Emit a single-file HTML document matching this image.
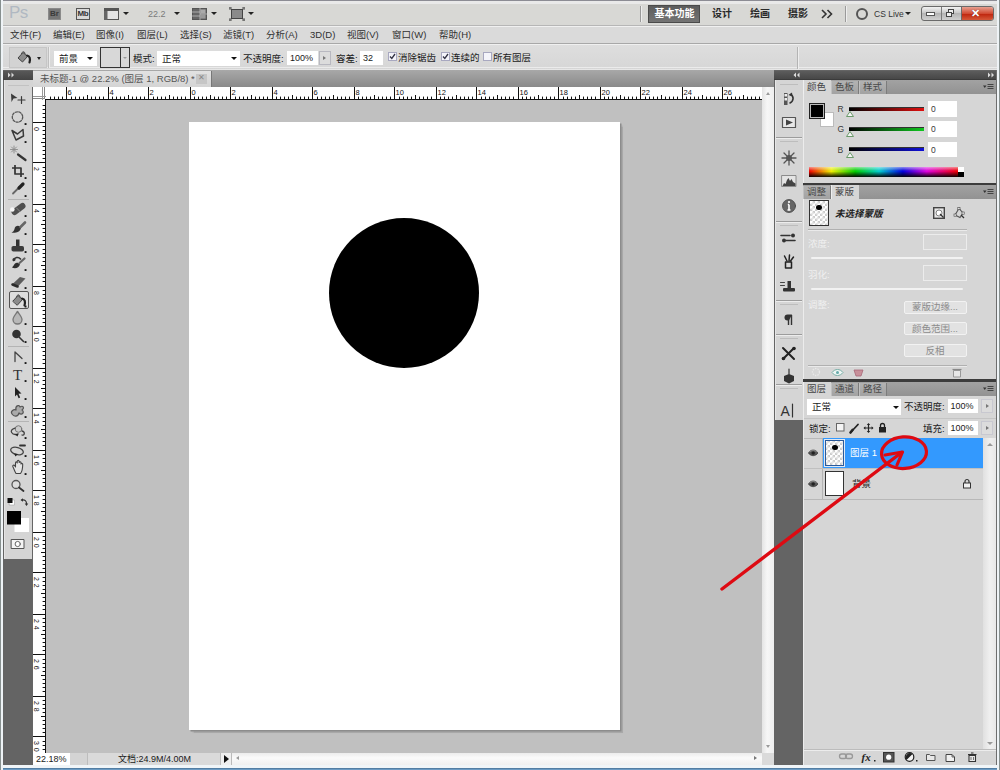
<!DOCTYPE html>
<html lang="zh-CN"><head><meta charset="utf-8"><title>Photoshop</title>
<style>
*{box-sizing:border-box;margin:0;padding:0}
html,body{width:1000px;height:770px;overflow:hidden;background:#d6d6d6}
body{font-family:"Liberation Sans","Noto Sans CJK SC",sans-serif;font-size:12px;color:#1a1a1a;position:relative;line-height:1}
.a{position:absolute}
.t{position:absolute;white-space:nowrap;line-height:14px;height:14px}
#win{left:0;top:0;width:1000px;height:770px;background:#d6d6d6;overflow:hidden}
/* bars */
#appbar{left:2px;top:1px;width:996px;height:25px;background:#d8d8d6}
#menubar{left:2px;top:27px;width:996px;height:16px;background:#d9d9d9}
#optbar{left:2px;top:44px;width:996px;height:26px;background:#dcdcdc}
.menu{top:29px;font-size:12px;color:#222}
.wht{background:#fff}
</style></head><body>
<div id="win" class="a">
<!--TOP-->
<div class="a" style="left:0;top:0;width:1000px;height:1px;background:#8c8c94"></div>
<div class="a" style="left:1px;top:1px;width:998px;height:2.500px;background:#e9e9e9"></div>
<div class="a" style="left:3px;top:3.500px;width:994px;height:22px;background:#d8d8d5"></div><div class="a" style="left:3px;top:25.200px;width:994px;height:1px;background:#b6b6b6"></div>
<div class="a" style="left:3px;top:26.200px;width:994px;height:1px;background:#f0f0f0"></div>
<div class="a" style="left:3px;top:27px;width:994px;height:16px;background:#dadada"></div>
<div class="a" style="left:3px;top:43px;width:994px;height:1px;background:#a8a8a8"></div><div class="a" style="left:3px;top:44px;width:994px;height:1px;background:#f0f0f0;z-index:1"></div>
<div class="a" style="left:3px;top:44px;width:994px;height:26px;background:linear-gradient(#dedede,#d6d6d6)"></div>
<div class="a" style="left:3px;top:66.500px;width:994px;height:1px;background:#ebebeb"></div><div class="a" style="left:3px;top:69px;width:994px;height:1px;background:#e6e6e6"></div>
<div class="t" style="left:9px;top:4px;font-size:17px;line-height:18px;height:18px;color:#b0b8c2;letter-spacing:-0.5px">Ps</div>
<div class="a" style="left:48px;top:8px;width:12.5px;height:11.5px;background:#767676;border:1px solid #8a8a8a"></div>
<div class="t" style="left:50px;top:7px;font-size:8px;font-weight:bold;color:#3a3a3a">Br</div>
<div class="a" style="left:76px;top:8px;width:14px;height:11.5px;background:#d8d8d8;border:1px solid #555"></div>
<div class="t" style="left:77.500px;top:7px;font-size:8px;font-weight:bold;color:#333;letter-spacing:-0.3px">Mb</div>
<svg class="a" style="left:104px;top:8px" width="15" height="12" viewBox="0 0 15 12"><rect x="0.500" y="0.500" width="14" height="11" fill="#e4e4e4" stroke="#555"/><rect x="0" y="0" width="15" height="3" fill="#555"/><rect x="0" y="3" width="3.500" height="9" fill="#666"/></svg>
<div class="a" style="left:123px;top:12px;width:0;height:0;border-top:3.5px solid #222;border-left:3.0px solid transparent;border-right:3.0px solid transparent"></div>
<div class="t" style="left:148px;top:6.500px;font-size:9px;color:#7a7a7a">22.2</div>
<div class="a" style="left:174px;top:12px;width:0;height:0;border-top:3.5px solid #222;border-left:3.0px solid transparent;border-right:3.0px solid transparent"></div>
<svg class="a" style="left:192px;top:8px" width="15" height="12" viewBox="0 0 15 12"><rect x="0.500" y="0.500" width="14" height="11" fill="#666" stroke="#555"/><rect x="8.500" y="1.500" width="5" height="4" fill="#aaa"/><rect x="8.500" y="6.500" width="5" height="4" fill="#999"/><path d="M8 0v12M0 4h8M0 8h8M8 6h7" stroke="#ccc" stroke-width="0.700"/></svg>
<div class="a" style="left:211px;top:12px;width:0;height:0;border-top:3.5px solid #222;border-left:3.0px solid transparent;border-right:3.0px solid transparent"></div>
<svg class="a" style="left:229px;top:7px" width="16" height="14" viewBox="0 0 16 14"><rect x="2.500" y="2.500" width="11" height="9" fill="#8a8a8a" stroke="#444"/><path d="M0 1h3M1 0v3M13 1h3M15 0v3M0 13h3M1 11v3M13 13h3M15 11v3" stroke="#555" stroke-width="1"/></svg>
<div class="a" style="left:248px;top:12px;width:0;height:0;border-top:3.5px solid #222;border-left:3.0px solid transparent;border-right:3.0px solid transparent"></div>
<div class="a" style="left:640px;top:6px;width:1px;height:16px;background:#9a9a9a"></div><div class="a" style="left:641px;top:6px;width:1px;height:16px;background:#eee"></div>
<div class="a" style="left:648px;top:5px;width:52px;height:18px;background:linear-gradient(#5c5c5c,#747474);border:1px solid #4a4a4a"></div>
<div class="t" style="left:654.500px;top:7px;font-size:10px;font-weight:bold;color:#fff">基本功能</div>
<div class="t" style="left:712px;top:7px;font-size:10px;font-weight:bold;color:#2a2a2a">设计</div>
<div class="t" style="left:750px;top:7px;font-size:10px;font-weight:bold;color:#2a2a2a">绘画</div>
<div class="t" style="left:788px;top:7px;font-size:10px;font-weight:bold;color:#2a2a2a">摄影</div>
<svg class="a" style="left:821px;top:9px" width="12" height="10" viewBox="0 0 12 10"><path d="M1 1l4 4l-4 4M6.500 1l4 4l-4 4" stroke="#333" stroke-width="1.600" fill="none"/></svg>
<div class="a" style="left:845px;top:6px;width:1px;height:16px;background:#9a9a9a"></div><div class="a" style="left:846px;top:6px;width:1px;height:16px;background:#eee"></div>
<div class="a" style="left:856px;top:7.500px;width:12px;height:12px;border:2.500px solid #555;border-radius:50%"></div>
<div class="t" style="left:874px;top:7px;font-size:8.500px;color:#333">CS Live</div>
<div class="a" style="left:905px;top:12px;width:0;height:0;border-top:3.5px solid #222;border-left:3.0px solid transparent;border-right:3.0px solid transparent"></div>
<div class="a" style="left:921px;top:6px;width:72.500px;height:14.500px;border:1px solid #6a6a6a;border-radius:3px;background:linear-gradient(#f2f2f2,#c4c4c4 50%,#b4b4b4 50%,#d0d0d0);overflow:hidden"><div class="a" style="left:38.500px;top:0;width:34px;height:14px;background:linear-gradient(#e8a090,#d04830 48%,#c02810 52%,#d86040);border-left:1px solid #6a6a6a"></div><div class="a" style="left:19px;top:0;width:1px;height:14px;background:#7a7a7a"></div></div>
<div class="a" style="left:926px;top:12px;width:9px;height:4px;background:#fff;border:1px solid #555"></div>
<div class="a" style="left:948px;top:9px;width:6px;height:5px;border:1px solid #444;background:#eee"></div><div class="a" style="left:945.500px;top:11.500px;width:6px;height:5px;border:1px solid #444;background:#eee"></div>
<div class="t" style="left:971px;top:5.500px;font-size:11px;font-weight:bold;color:#fff;text-shadow:0 0 1px #600">✕</div>
<div class="t" style="left:10px;top:28px;font-size:9.500px;color:#303030">文件(F)</div>
<div class="t" style="left:53px;top:28px;font-size:9.500px;color:#303030">编辑(E)</div>
<div class="t" style="left:96px;top:28px;font-size:9.500px;color:#303030">图像(I)</div>
<div class="t" style="left:137px;top:28px;font-size:9.500px;color:#303030">图层(L)</div>
<div class="t" style="left:180px;top:28px;font-size:9.500px;color:#303030">选择(S)</div>
<div class="t" style="left:223px;top:28px;font-size:9.500px;color:#303030">滤镜(T)</div>
<div class="t" style="left:266px;top:28px;font-size:9.500px;color:#303030">分析(A)</div>
<div class="t" style="left:310px;top:28px;font-size:9.500px;color:#303030">3D(D)</div>
<div class="t" style="left:347px;top:28px;font-size:9.500px;color:#303030">视图(V)</div>
<div class="t" style="left:392px;top:28px;font-size:9.500px;color:#303030">窗口(W)</div>
<div class="t" style="left:439px;top:28px;font-size:9.500px;color:#303030">帮助(H)</div>
<div class="a" style="left:8.500px;top:47px;width:38.500px;height:21px;background:#d3d3d3;border:1px solid #c6c6c6"></div>
<svg class="a" style="left:15px;top:49px" width="18" height="16" viewBox="0 0 18 16"><path d="M3 9 L8 3.500 L12.500 7.500 L7.500 13z" fill="#8c8c8c" stroke="#444" stroke-width="1"/><path d="M12 6.500 C15 7 15.500 10 14.500 13.500" stroke="#222" stroke-width="2.200" fill="none" stroke-linecap="round"/><path d="M6.500 5 c0.500 -3 3.500 -3 3.500 0" stroke="#444" stroke-width="1" fill="none"/></svg>
<div class="a" style="left:37px;top:57px;width:0;height:0;border-top:3.0px solid #222;border-left:2.5px solid transparent;border-right:2.5px solid transparent"></div>
<div class="a" style="left:48px;top:47px;width:1px;height:21px;background:#c0c0c0"></div><div class="a" style="left:49px;top:47px;width:1px;height:21px;background:#ececec"></div>
<div class="a wht" style="left:54px;top:51px;width:43px;height:15px"></div>
<div class="t" style="left:59px;top:51.500px;font-size:9.500px">前景</div>
<div class="a" style="left:87px;top:57px;width:0;height:0;border-top:3.5px solid #111;border-left:3.0px solid transparent;border-right:3.0px solid transparent"></div>
<div class="a" style="left:100px;top:46.500px;width:29.500px;height:21px;border:1px solid #333;background:#d8d8d8"></div><div class="a" style="left:120px;top:47px;width:1px;height:20px;background:#333"></div>
<div class="a" style="left:122.5px;top:57px;width:0;height:0;border-top:2.5px solid #999;border-left:2.0px solid transparent;border-right:2.0px solid transparent"></div>
<div class="t" style="left:133px;top:51.500px;font-size:9.500px">模式:</div>
<div class="a wht" style="left:157px;top:51px;width:83px;height:15px"></div>
<div class="t" style="left:162px;top:51.500px;font-size:9.500px">正常</div>
<div class="a" style="left:231px;top:57px;width:0;height:0;border-top:3.5px solid #111;border-left:3.0px solid transparent;border-right:3.0px solid transparent"></div>
<div class="t" style="left:243px;top:51.500px;font-size:9.500px">不透明度:</div>
<div class="a wht" style="left:287px;top:51px;width:31px;height:13.500px"></div>
<div class="t" style="left:290px;top:51px;font-size:9px">100%</div>
<div class="a" style="left:318.500px;top:51px;width:12.500px;height:13.500px;background:#dcdcdc;border:1px solid #b8b8c0"></div>
<div class="a" style="left:323px;top:55.500px;width:0;height:0;border-left:3px solid #777;border-top:2.500px solid transparent;border-bottom:2.500px solid transparent"></div>
<div class="t" style="left:336px;top:51.500px;font-size:9.500px">容差:</div>
<div class="a wht" style="left:360px;top:51px;width:23px;height:13.500px"></div>
<div class="t" style="left:363px;top:51px;font-size:9px">32</div>
<div class="a" style="left:388px;top:51.500px;width:8.500px;height:9px;background:#f4f4fa;border:1px solid #a8a8c0"></div>
<svg class="a" style="left:388px;top:52px" width="9" height="9" viewBox="0 0 9 9"><path d="M2 4.500l1.800 2L7 2" stroke="#334" stroke-width="1.300" fill="none"/></svg>
<div class="t" style="left:398px;top:50.500px;font-size:9.500px">消除锯齿</div>
<div class="a" style="left:441px;top:51.500px;width:8.500px;height:9px;background:#f4f4fa;border:1px solid #a8a8c0"></div>
<svg class="a" style="left:441px;top:52px" width="9" height="9" viewBox="0 0 9 9"><path d="M2 4.500l1.800 2L7 2" stroke="#334" stroke-width="1.300" fill="none"/></svg>
<div class="t" style="left:451px;top:50.500px;font-size:9.500px">连续的</div>
<div class="a" style="left:483px;top:51.500px;width:8.500px;height:9px;background:#f4f4fa;border:1px solid #a8a8c0"></div>
<div class="t" style="left:493px;top:50.500px;font-size:9.500px">所有图层</div>
<div class="a" style="left:797px;top:47px;width:1px;height:22px;background:#b4b4b4"></div><div class="a" style="left:798px;top:47px;width:1px;height:22px;background:#eee"></div>
<div class="a" style="left:996.200px;top:70px;width:1px;height:695px;background:#6e6e6e;z-index:3"></div><div class="a" style="left:997px;top:0;width:2.400px;height:770px;background:#eef3f6;z-index:3"></div><div class="a" style="left:999.300px;top:0;width:1px;height:770px;background:#87908f;z-index:3"></div>
<div class="a" style="left:0;top:764.500px;width:1000px;height:3.500px;background:#f0f5f8"></div><div class="a" style="left:0;top:767.800px;width:1000px;height:2.200px;background:linear-gradient(#3f607f,#5f8fb8 40%,#74a4cc)"></div>
<!--/TOP-->
<!--LEFT-->
<div class="a" style="left:0;top:0;width:1px;height:770px;background:#87908f"></div>
<div class="a" style="left:1px;top:0;width:2px;height:770px;background:#eef3f6"></div>
<div class="a" style="left:3px;top:70px;width:30px;height:695px;background:#646464"></div>
<div class="a" style="left:3px;top:70.5px;width:29.5px;height:9.5px;background:linear-gradient(#585858,#444)"></div>
<div class="a" style="left:3.5px;top:80px;width:29px;height:478.5px;background:#d5d5d5;border-left:1px solid #e4e4e4"></div>
<svg class="a" style="left:3px;top:70px" width="30" height="10" viewBox="0 0 30 10"><path d="M5 2.5l2.5 2.5L5 7.5zM8.5 2.5l2.5 2.5L8.500 7.5z" fill="#d8d8d8"/></svg>
<div class="a" style="left:8px;top:85px;width:21px;height:1px;background:#c2c2c2"></div>
<div class="a" style="left:8px;top:199px;width:21px;height:1px;background:#b4b4b4"></div>
<div class="a" style="left:8px;top:346px;width:21px;height:1px;background:#b4b4b4"></div>
<div class="a" style="left:8px;top:421px;width:21px;height:1px;background:#b4b4b4"></div>
<div class="a" style="left:8.5px;top:291px;width:20px;height:17.5px;border:1px solid #555;background:#dedede;border-radius:2px"></div>
<svg class="a" style="left:0;top:80px" width="33" height="480" viewBox="0 80 33 480" fill="none" stroke-linecap="round" stroke-linejoin="round"><rect x="24.6" y="123.1" width="1.9" height="1.9" fill="#1a1a1a"/><rect x="24.6" y="141.1" width="1.9" height="1.9" fill="#1a1a1a"/><rect x="24.6" y="177.1" width="1.9" height="1.9" fill="#1a1a1a"/><rect x="24.6" y="195.1" width="1.9" height="1.9" fill="#1a1a1a"/><rect x="24.6" y="215.1" width="1.9" height="1.9" fill="#1a1a1a"/><rect x="24.6" y="233.1" width="1.9" height="1.9" fill="#1a1a1a"/><rect x="24.6" y="251.1" width="1.9" height="1.9" fill="#1a1a1a"/><rect x="24.6" y="269.1" width="1.9" height="1.9" fill="#1a1a1a"/><rect x="24.6" y="287.1" width="1.9" height="1.9" fill="#1a1a1a"/><rect x="24.6" y="305.6" width="1.9" height="1.9" fill="#1a1a1a"/><rect x="24.6" y="323.1" width="1.9" height="1.9" fill="#1a1a1a"/><rect x="24.6" y="341.1" width="1.9" height="1.9" fill="#1a1a1a"/><rect x="24.6" y="362.1" width="1.9" height="1.9" fill="#1a1a1a"/><rect x="24.6" y="380.1" width="1.9" height="1.9" fill="#1a1a1a"/><rect x="24.6" y="398.1" width="1.9" height="1.9" fill="#1a1a1a"/><rect x="24.6" y="416.1" width="1.9" height="1.9" fill="#1a1a1a"/><rect x="24.6" y="437.1" width="1.9" height="1.9" fill="#1a1a1a"/><rect x="24.6" y="455.1" width="1.9" height="1.9" fill="#1a1a1a"/><rect x="24.6" y="473.1" width="1.9" height="1.9" fill="#1a1a1a"/><path d="M11 93.500 L17.500 98 L13.500 98.500 L11.500 102z" fill="#3a3a3a"/><path d="M18 100h7M21.500 96.500v7" stroke="#3a3a3a" stroke-width="1.200"/><circle cx="17.500" cy="117" r="5.200" stroke="#555" stroke-width="1.300" stroke-dasharray="2.200 1.400"/><path d="M12 130.500 L17.500 134 L23 129.500 L23.500 136 L16 140 z" stroke="#3a3a3a" stroke-width="1.500"/><path d="M18 154.500 L25.500 160" stroke="#333" stroke-width="2.200"/><path d="M14 146v7M10.500 149.500h7M11.500 147l5 5M16.500 147l-5 5" stroke="#8a8a8a" stroke-width="0.900"/><path d="M15 165v9h9M12 168h9v9" stroke="#333" stroke-width="1.700" stroke-linecap="butt"/><path d="M13 193.500 L19.500 187" stroke="#666" stroke-width="1.800"/><path d="M19 188 L23 184" stroke="#222" stroke-width="3.200"/><path d="M14.500 212 L22.500 206" stroke="#505050" stroke-width="6"/><path d="M16.500 208l3.500 3.500" stroke="#888" stroke-width="1"/><circle cx="12.300" cy="209.500" r="2.300" fill="#f6f6f6"/><path d="M11.500 232.500 C14 233 20 233 21 228 C19.500 224.500 15 225.500 14.500 229 C14 231 13 232 11.500 232.500z" fill="#333"/><path d="M20.500 227 L25 222.500" stroke="#666" stroke-width="2.600"/><path d="M16 239.500h3.500v7h-3.500z" fill="#333"/><rect x="11.500" y="246" width="12.500" height="5.500" rx="1.800" fill="#3c3c3c"/><path d="M12 267.500 C15 269 19 268 20 264.500 C18 261.500 14.500 262.500 14 265z" fill="#2e2e2e"/><path d="M19.500 263 L24.500 258.500" stroke="#666" stroke-width="2.200"/><path d="M13.500 260.500 a4 4 0 0 1 7 -1.500" stroke="#333" stroke-width="1.600"/><circle cx="14" cy="259.500" r="1.500" fill="#333"/><path d="M12 284.500 L20 277 L25.500 278.500 L17.500 287z" fill="#5c5c5c"/><path d="M12.500 284.500l5 2" stroke="#2a2a2a" stroke-width="2.600"/><path d="M13 301 L18 295.500 L22.500 299.500 L17.500 305z" fill="#8c8c8c" stroke="#444" stroke-width="1"/><path d="M22 298.500 C25 299 25.500 302 24.500 305.500" stroke="#222" stroke-width="2.200"/><path d="M16.500 297 c0.500 -3 3.500 -3 3.500 0" stroke="#444" stroke-width="1"/><path d="M17.500 311.500 C20 315 22 317 22 319.500 a4.500 4.500 0 0 1 -9 0 C13 317 15 315 17.500 311.500z" fill="#b8b8b8" stroke="#777" stroke-width="1.300"/><circle cx="16.500" cy="334" r="4.300" fill="#333"/><path d="M19.500 337.500 L23.500 341.500" stroke="#333" stroke-width="1.600"/><path d="M15 361.500 V352 L22 358.500" stroke="#444" stroke-width="1.300"/><text x="17.500" y="379.500" font-family="Liberation Serif, serif" font-size="15" text-anchor="middle" fill="#333" stroke="none">T</text><path d="M15 387 L21.500 393.500 L18.500 393.700 L20.200 397.500 L18.600 398.200 L17 394.500 L15 396.500z" fill="#222"/><path d="M12 414 C10 411 14 409 16 410 C15 406 19 404 20 407 C23 405 25 408 22 410 C25 412 22 416 19 413 C18 417 14 417 12 414z" fill="#aaa" stroke="#555" stroke-width="1.200"/><circle cx="18.500" cy="429" r="3.300" fill="#ccc" stroke="#777" stroke-width="1"/><path d="M15 428 C8 430 12 436 18 434 M22 431 C26 432 24 436 22 435" stroke="#444" stroke-width="1.300"/><path d="M15 434.500l3.500 -1l-1 3z" fill="#222"/><ellipse cx="17" cy="451" rx="6.500" ry="3.500" stroke="#444" stroke-width="1.300" transform="rotate(15 17 451)"/><path d="M14 453.500l4 0.500l-2.500 2.500z" fill="#222"/><path d="M20 445.500h5" stroke="#333" stroke-width="1.800"/><path d="M13 467 C12 465 14 464.500 15 466 L15.500 467 V463 C15.500 461.500 17 461.500 17.200 463 V461.500 C17.500 460 19 460 19.200 461.500 V462.500 C19.500 461.300 21 461.500 21 463 V464 C21.500 463 22.800 463.300 22.700 464.500 C22.700 468 22.500 471 20.500 473.500 H16 C15 472 14 469 13 467z" fill="#e4e4e4" stroke="#444" stroke-width="1.100"/><circle cx="16" cy="484.500" r="4" stroke="#555" stroke-width="1.300" fill="#ddd"/><path d="M19 487.500 L23.500 491" stroke="#333" stroke-width="1.800"/><rect x="9.500" y="500" width="5" height="5" fill="#fff" stroke="#999" stroke-width="0.500"/><rect x="7.500" y="498" width="5" height="5" fill="#111"/><path d="M22 500 C25 499.500 26.500 501 26.500 503.500" stroke="#333" stroke-width="1.200"/><path d="M20.500 500l2.500 -1.800v3.600zM26.500 506l-1.800 -2.500h3.600z" fill="#333"/><rect x="14.500" y="518" width="14.500" height="14" fill="#fff"/><rect x="7" y="511" width="14" height="13.500" fill="#000"/><rect x="11.500" y="539.500" width="12.500" height="9" fill="#f4f4f4" stroke="#555" stroke-width="1"/><circle cx="17.700" cy="544" r="2.600" stroke="#666" stroke-width="1" fill="#fff"/></svg>
<!--/LEFT-->
<!--DOC-->
<div class="a" style="left:33px;top:70px;width:741px;height:17px;background:linear-gradient(#a8a8a8,#8a8a8a)"></div>
<div class="a" style="left:33px;top:71px;width:179px;height:16px;background:linear-gradient(#e2e2e2,#d4d4d4);border-right:1px solid #777"></div>
<div class="t" style="left:40px;top:72px;font-size:9.5px;color:#555">未标题-1 @ 22.2% (图层 1, RGB/8) *</div>
<div class="a" style="left:196px;top:74px;width:11px;height:10px;background:#c6c6c6"></div>
<div class="t" style="left:198px;top:71px;font-size:8px;color:#888">✕</div>
<div class="a" style="left:46px;top:100px;width:716px;height:653px;background:#c0c0c0"></div>
<div class="a wht" style="left:33px;top:87px;width:729px;height:12px"></div>
<div class="a wht" style="left:33px;top:87px;width:12px;height:666px"></div>
<svg class="a" style="left:32px;top:87px" width="730" height="666" viewBox="32 87 730 666" font-family="Liberation Sans, sans-serif" font-size="7.5" fill="#222"><rect x="45" y="99" width="717" height="1" fill="#111"/><rect x="45" y="99" width="1" height="654" fill="#111"/><rect x="32" y="87" width="1" height="666" fill="#666"/><rect x="33" y="98" width="12" height="1" fill="#888"/><rect x="44" y="87" width="1" height="12" fill="#888"/><rect x="33" y="96" width="13" height="1" fill="#999"/><rect x="42" y="87" width="1" height="13" fill="#999"/><g fill="#111"><rect x="50" y="96.6" width="1" height="2.4"/><rect x="54" y="96.6" width="1" height="2.4"/><rect x="58" y="96.6" width="1" height="2.4"/><rect x="62" y="96.6" width="1" height="2.4"/><rect x="66" y="87" width="1" height="12"/><text x="67.5" y="94.8">6</text><rect x="71" y="96.6" width="1" height="2.4"/><rect x="75" y="96.6" width="1" height="2.4"/><rect x="79" y="96.6" width="1" height="2.4"/><rect x="83" y="96.6" width="1" height="2.4"/><rect x="87" y="95" width="1" height="4"/><rect x="91" y="96.6" width="1" height="2.4"/><rect x="95" y="96.6" width="1" height="2.4"/><rect x="99" y="96.6" width="1" height="2.4"/><rect x="103" y="96.6" width="1" height="2.4"/><rect x="108" y="87" width="1" height="12"/><text x="109.5" y="94.8">4</text><rect x="112" y="96.6" width="1" height="2.4"/><rect x="116" y="96.6" width="1" height="2.4"/><rect x="120" y="96.6" width="1" height="2.4"/><rect x="124" y="96.6" width="1" height="2.4"/><rect x="128" y="95" width="1" height="4"/><rect x="132" y="96.6" width="1" height="2.4"/><rect x="136" y="96.6" width="1" height="2.4"/><rect x="140" y="96.6" width="1" height="2.4"/><rect x="144" y="96.6" width="1" height="2.4"/><rect x="148" y="87" width="1" height="12"/><text x="149.5" y="94.8">2</text><rect x="153" y="96.6" width="1" height="2.4"/><rect x="157" y="96.6" width="1" height="2.4"/><rect x="161" y="96.6" width="1" height="2.4"/><rect x="165" y="96.6" width="1" height="2.4"/><rect x="169" y="95" width="1" height="4"/><rect x="173" y="96.6" width="1" height="2.4"/><rect x="177" y="96.6" width="1" height="2.4"/><rect x="181" y="96.6" width="1" height="2.4"/><rect x="185" y="96.6" width="1" height="2.4"/><rect x="190" y="87" width="1" height="12"/><text x="191.5" y="94.8">0</text><rect x="194" y="96.6" width="1" height="2.4"/><rect x="198" y="96.6" width="1" height="2.4"/><rect x="202" y="96.6" width="1" height="2.4"/><rect x="206" y="96.6" width="1" height="2.4"/><rect x="210" y="95" width="1" height="4"/><rect x="214" y="96.6" width="1" height="2.4"/><rect x="218" y="96.6" width="1" height="2.4"/><rect x="222" y="96.6" width="1" height="2.4"/><rect x="226" y="96.6" width="1" height="2.4"/><rect x="230" y="87" width="1" height="12"/><text x="231.5" y="94.8">2</text><rect x="235" y="96.6" width="1" height="2.4"/><rect x="239" y="96.6" width="1" height="2.4"/><rect x="243" y="96.6" width="1" height="2.4"/><rect x="247" y="96.6" width="1" height="2.4"/><rect x="251" y="95" width="1" height="4"/><rect x="255" y="96.6" width="1" height="2.4"/><rect x="259" y="96.6" width="1" height="2.4"/><rect x="263" y="96.6" width="1" height="2.4"/><rect x="267" y="96.6" width="1" height="2.4"/><rect x="272" y="87" width="1" height="12"/><text x="273.5" y="94.8">4</text><rect x="276" y="96.6" width="1" height="2.4"/><rect x="280" y="96.6" width="1" height="2.4"/><rect x="284" y="96.6" width="1" height="2.4"/><rect x="288" y="96.6" width="1" height="2.4"/><rect x="292" y="95" width="1" height="4"/><rect x="296" y="96.6" width="1" height="2.4"/><rect x="300" y="96.6" width="1" height="2.4"/><rect x="304" y="96.6" width="1" height="2.4"/><rect x="308" y="96.6" width="1" height="2.4"/><rect x="312" y="87" width="1" height="12"/><text x="313.5" y="94.8">6</text><rect x="317" y="96.6" width="1" height="2.4"/><rect x="321" y="96.6" width="1" height="2.4"/><rect x="325" y="96.6" width="1" height="2.4"/><rect x="329" y="96.6" width="1" height="2.4"/><rect x="333" y="95" width="1" height="4"/><rect x="337" y="96.6" width="1" height="2.4"/><rect x="341" y="96.6" width="1" height="2.4"/><rect x="345" y="96.6" width="1" height="2.4"/><rect x="349" y="96.6" width="1" height="2.4"/><rect x="354" y="87" width="1" height="12"/><text x="355.5" y="94.8">8</text><rect x="358" y="96.6" width="1" height="2.4"/><rect x="362" y="96.6" width="1" height="2.4"/><rect x="366" y="96.6" width="1" height="2.4"/><rect x="370" y="96.6" width="1" height="2.4"/><rect x="374" y="95" width="1" height="4"/><rect x="378" y="96.6" width="1" height="2.4"/><rect x="382" y="96.6" width="1" height="2.4"/><rect x="386" y="96.6" width="1" height="2.4"/><rect x="390" y="96.6" width="1" height="2.4"/><rect x="394" y="87" width="1" height="12"/><text x="395.5" y="94.8">10</text><rect x="399" y="96.6" width="1" height="2.4"/><rect x="403" y="96.6" width="1" height="2.4"/><rect x="407" y="96.6" width="1" height="2.4"/><rect x="411" y="96.6" width="1" height="2.4"/><rect x="415" y="95" width="1" height="4"/><rect x="419" y="96.6" width="1" height="2.4"/><rect x="423" y="96.6" width="1" height="2.4"/><rect x="427" y="96.6" width="1" height="2.4"/><rect x="431" y="96.6" width="1" height="2.4"/><rect x="436" y="87" width="1" height="12"/><text x="437.5" y="94.8">12</text><rect x="440" y="96.6" width="1" height="2.4"/><rect x="444" y="96.6" width="1" height="2.4"/><rect x="448" y="96.6" width="1" height="2.4"/><rect x="452" y="96.6" width="1" height="2.4"/><rect x="456" y="95" width="1" height="4"/><rect x="460" y="96.6" width="1" height="2.4"/><rect x="464" y="96.6" width="1" height="2.4"/><rect x="468" y="96.6" width="1" height="2.4"/><rect x="472" y="96.6" width="1" height="2.4"/><rect x="476" y="87" width="1" height="12"/><text x="477.5" y="94.8">14</text><rect x="481" y="96.6" width="1" height="2.4"/><rect x="485" y="96.6" width="1" height="2.4"/><rect x="489" y="96.6" width="1" height="2.4"/><rect x="493" y="96.6" width="1" height="2.4"/><rect x="497" y="95" width="1" height="4"/><rect x="501" y="96.6" width="1" height="2.4"/><rect x="505" y="96.6" width="1" height="2.4"/><rect x="509" y="96.6" width="1" height="2.4"/><rect x="513" y="96.6" width="1" height="2.4"/><rect x="518" y="87" width="1" height="12"/><text x="519.5" y="94.8">16</text><rect x="522" y="96.6" width="1" height="2.4"/><rect x="526" y="96.6" width="1" height="2.4"/><rect x="530" y="96.6" width="1" height="2.4"/><rect x="534" y="96.6" width="1" height="2.4"/><rect x="538" y="95" width="1" height="4"/><rect x="542" y="96.6" width="1" height="2.4"/><rect x="546" y="96.6" width="1" height="2.4"/><rect x="550" y="96.6" width="1" height="2.4"/><rect x="554" y="96.6" width="1" height="2.4"/><rect x="558" y="87" width="1" height="12"/><text x="559.5" y="94.8">18</text><rect x="563" y="96.6" width="1" height="2.4"/><rect x="567" y="96.6" width="1" height="2.4"/><rect x="571" y="96.6" width="1" height="2.4"/><rect x="575" y="96.6" width="1" height="2.4"/><rect x="579" y="95" width="1" height="4"/><rect x="583" y="96.6" width="1" height="2.4"/><rect x="587" y="96.6" width="1" height="2.4"/><rect x="591" y="96.6" width="1" height="2.4"/><rect x="595" y="96.6" width="1" height="2.4"/><rect x="600" y="87" width="1" height="12"/><text x="601.5" y="94.8">20</text><rect x="604" y="96.6" width="1" height="2.4"/><rect x="608" y="96.6" width="1" height="2.4"/><rect x="612" y="96.6" width="1" height="2.4"/><rect x="616" y="96.6" width="1" height="2.4"/><rect x="620" y="95" width="1" height="4"/><rect x="624" y="96.6" width="1" height="2.4"/><rect x="628" y="96.6" width="1" height="2.4"/><rect x="632" y="96.6" width="1" height="2.4"/><rect x="636" y="96.6" width="1" height="2.4"/><rect x="640" y="87" width="1" height="12"/><text x="641.5" y="94.8">22</text><rect x="645" y="96.6" width="1" height="2.4"/><rect x="649" y="96.6" width="1" height="2.4"/><rect x="653" y="96.6" width="1" height="2.4"/><rect x="657" y="96.6" width="1" height="2.4"/><rect x="661" y="95" width="1" height="4"/><rect x="665" y="96.6" width="1" height="2.4"/><rect x="669" y="96.6" width="1" height="2.4"/><rect x="673" y="96.6" width="1" height="2.4"/><rect x="677" y="96.6" width="1" height="2.4"/><rect x="682" y="87" width="1" height="12"/><text x="683.5" y="94.8">24</text><rect x="686" y="96.6" width="1" height="2.4"/><rect x="690" y="96.6" width="1" height="2.4"/><rect x="694" y="96.6" width="1" height="2.4"/><rect x="698" y="96.6" width="1" height="2.4"/><rect x="702" y="95" width="1" height="4"/><rect x="706" y="96.6" width="1" height="2.4"/><rect x="710" y="96.6" width="1" height="2.4"/><rect x="714" y="96.6" width="1" height="2.4"/><rect x="718" y="96.6" width="1" height="2.4"/><rect x="722" y="87" width="1" height="12"/><text x="723.5" y="94.8">26</text><rect x="727" y="96.6" width="1" height="2.4"/><rect x="731" y="96.6" width="1" height="2.4"/><rect x="735" y="96.6" width="1" height="2.4"/><rect x="739" y="96.6" width="1" height="2.4"/><rect x="743" y="95" width="1" height="4"/><rect x="747" y="96.6" width="1" height="2.4"/><rect x="751" y="96.6" width="1" height="2.4"/><rect x="755" y="96.6" width="1" height="2.4"/><rect x="759" y="96.6" width="1" height="2.4"/></g><g fill="#111"><rect x="42.6" y="105" width="2.4" height="1"/><rect x="42.6" y="109" width="2.4" height="1"/><rect x="42.6" y="113" width="2.4" height="1"/><rect x="42.6" y="117" width="2.4" height="1"/><rect x="33" y="122" width="12" height="1"/><text transform="translate(34.2,126.9) rotate(90)" letter-spacing="3" font-size="7">0</text><rect x="42.6" y="126" width="2.4" height="1"/><rect x="42.6" y="130" width="2.4" height="1"/><rect x="42.6" y="134" width="2.4" height="1"/><rect x="42.6" y="138" width="2.4" height="1"/><rect x="41" y="142" width="4" height="1"/><rect x="42.6" y="146" width="2.4" height="1"/><rect x="42.6" y="150" width="2.4" height="1"/><rect x="42.6" y="154" width="2.4" height="1"/><rect x="42.6" y="158" width="2.4" height="1"/><rect x="33" y="162" width="12" height="1"/><text transform="translate(34.2,166.9) rotate(90)" letter-spacing="3" font-size="7">2</text><rect x="42.6" y="167" width="2.4" height="1"/><rect x="42.6" y="171" width="2.4" height="1"/><rect x="42.6" y="175" width="2.4" height="1"/><rect x="42.6" y="179" width="2.4" height="1"/><rect x="41" y="183" width="4" height="1"/><rect x="42.6" y="187" width="2.4" height="1"/><rect x="42.6" y="191" width="2.4" height="1"/><rect x="42.6" y="195" width="2.4" height="1"/><rect x="42.6" y="199" width="2.4" height="1"/><rect x="33" y="204" width="12" height="1"/><text transform="translate(34.2,208.9) rotate(90)" letter-spacing="3" font-size="7">4</text><rect x="42.6" y="208" width="2.4" height="1"/><rect x="42.6" y="212" width="2.4" height="1"/><rect x="42.6" y="216" width="2.4" height="1"/><rect x="42.6" y="220" width="2.4" height="1"/><rect x="41" y="224" width="4" height="1"/><rect x="42.6" y="228" width="2.4" height="1"/><rect x="42.6" y="232" width="2.4" height="1"/><rect x="42.6" y="236" width="2.4" height="1"/><rect x="42.6" y="240" width="2.4" height="1"/><rect x="33" y="244" width="12" height="1"/><text transform="translate(34.2,248.9) rotate(90)" letter-spacing="3" font-size="7">6</text><rect x="42.6" y="249" width="2.4" height="1"/><rect x="42.6" y="253" width="2.4" height="1"/><rect x="42.6" y="257" width="2.4" height="1"/><rect x="42.6" y="261" width="2.4" height="1"/><rect x="41" y="265" width="4" height="1"/><rect x="42.6" y="269" width="2.4" height="1"/><rect x="42.6" y="273" width="2.4" height="1"/><rect x="42.6" y="277" width="2.4" height="1"/><rect x="42.6" y="281" width="2.4" height="1"/><rect x="33" y="286" width="12" height="1"/><text transform="translate(34.2,290.9) rotate(90)" letter-spacing="3" font-size="7">8</text><rect x="42.6" y="290" width="2.4" height="1"/><rect x="42.6" y="294" width="2.4" height="1"/><rect x="42.6" y="298" width="2.4" height="1"/><rect x="42.6" y="302" width="2.4" height="1"/><rect x="41" y="306" width="4" height="1"/><rect x="42.6" y="310" width="2.4" height="1"/><rect x="42.6" y="314" width="2.4" height="1"/><rect x="42.6" y="318" width="2.4" height="1"/><rect x="42.6" y="322" width="2.4" height="1"/><rect x="33" y="326" width="12" height="1"/><text transform="translate(34.2,330.9) rotate(90)" letter-spacing="3" font-size="7">10</text><rect x="42.6" y="331" width="2.4" height="1"/><rect x="42.6" y="335" width="2.4" height="1"/><rect x="42.6" y="339" width="2.4" height="1"/><rect x="42.6" y="343" width="2.4" height="1"/><rect x="41" y="347" width="4" height="1"/><rect x="42.6" y="351" width="2.4" height="1"/><rect x="42.6" y="355" width="2.4" height="1"/><rect x="42.6" y="359" width="2.4" height="1"/><rect x="42.6" y="363" width="2.4" height="1"/><rect x="33" y="368" width="12" height="1"/><text transform="translate(34.2,372.9) rotate(90)" letter-spacing="3" font-size="7">12</text><rect x="42.6" y="372" width="2.4" height="1"/><rect x="42.6" y="376" width="2.4" height="1"/><rect x="42.6" y="380" width="2.4" height="1"/><rect x="42.6" y="384" width="2.4" height="1"/><rect x="41" y="388" width="4" height="1"/><rect x="42.6" y="392" width="2.4" height="1"/><rect x="42.6" y="396" width="2.4" height="1"/><rect x="42.6" y="400" width="2.4" height="1"/><rect x="42.6" y="404" width="2.4" height="1"/><rect x="33" y="408" width="12" height="1"/><text transform="translate(34.2,412.9) rotate(90)" letter-spacing="3" font-size="7">14</text><rect x="42.6" y="413" width="2.4" height="1"/><rect x="42.6" y="417" width="2.4" height="1"/><rect x="42.6" y="421" width="2.4" height="1"/><rect x="42.6" y="425" width="2.4" height="1"/><rect x="41" y="429" width="4" height="1"/><rect x="42.6" y="433" width="2.4" height="1"/><rect x="42.6" y="437" width="2.4" height="1"/><rect x="42.6" y="441" width="2.4" height="1"/><rect x="42.6" y="445" width="2.4" height="1"/><rect x="33" y="450" width="12" height="1"/><text transform="translate(34.2,454.9) rotate(90)" letter-spacing="3" font-size="7">16</text><rect x="42.6" y="454" width="2.4" height="1"/><rect x="42.6" y="458" width="2.4" height="1"/><rect x="42.6" y="462" width="2.4" height="1"/><rect x="42.6" y="466" width="2.4" height="1"/><rect x="41" y="470" width="4" height="1"/><rect x="42.6" y="474" width="2.4" height="1"/><rect x="42.6" y="478" width="2.4" height="1"/><rect x="42.6" y="482" width="2.4" height="1"/><rect x="42.6" y="486" width="2.4" height="1"/><rect x="33" y="490" width="12" height="1"/><text transform="translate(34.2,494.9) rotate(90)" letter-spacing="3" font-size="7">18</text><rect x="42.6" y="495" width="2.4" height="1"/><rect x="42.6" y="499" width="2.4" height="1"/><rect x="42.6" y="503" width="2.4" height="1"/><rect x="42.6" y="507" width="2.4" height="1"/><rect x="41" y="511" width="4" height="1"/><rect x="42.6" y="515" width="2.4" height="1"/><rect x="42.6" y="519" width="2.4" height="1"/><rect x="42.6" y="523" width="2.4" height="1"/><rect x="42.6" y="527" width="2.4" height="1"/><rect x="33" y="532" width="12" height="1"/><text transform="translate(34.2,536.9) rotate(90)" letter-spacing="3" font-size="7">20</text><rect x="42.6" y="536" width="2.4" height="1"/><rect x="42.6" y="540" width="2.4" height="1"/><rect x="42.6" y="544" width="2.4" height="1"/><rect x="42.6" y="548" width="2.4" height="1"/><rect x="41" y="552" width="4" height="1"/><rect x="42.6" y="556" width="2.4" height="1"/><rect x="42.6" y="560" width="2.4" height="1"/><rect x="42.6" y="564" width="2.4" height="1"/><rect x="42.6" y="568" width="2.4" height="1"/><rect x="33" y="572" width="12" height="1"/><text transform="translate(34.2,576.9) rotate(90)" letter-spacing="3" font-size="7">22</text><rect x="42.6" y="577" width="2.4" height="1"/><rect x="42.6" y="581" width="2.4" height="1"/><rect x="42.6" y="585" width="2.4" height="1"/><rect x="42.6" y="589" width="2.4" height="1"/><rect x="41" y="593" width="4" height="1"/><rect x="42.6" y="597" width="2.4" height="1"/><rect x="42.6" y="601" width="2.4" height="1"/><rect x="42.6" y="605" width="2.4" height="1"/><rect x="42.6" y="609" width="2.4" height="1"/><rect x="33" y="614" width="12" height="1"/><text transform="translate(34.2,618.9) rotate(90)" letter-spacing="3" font-size="7">24</text><rect x="42.6" y="618" width="2.4" height="1"/><rect x="42.6" y="622" width="2.4" height="1"/><rect x="42.6" y="626" width="2.4" height="1"/><rect x="42.6" y="630" width="2.4" height="1"/><rect x="41" y="634" width="4" height="1"/><rect x="42.6" y="638" width="2.4" height="1"/><rect x="42.6" y="642" width="2.4" height="1"/><rect x="42.6" y="646" width="2.4" height="1"/><rect x="42.6" y="650" width="2.4" height="1"/><rect x="33" y="654" width="12" height="1"/><text transform="translate(34.2,658.9) rotate(90)" letter-spacing="3" font-size="7">26</text><rect x="42.6" y="659" width="2.4" height="1"/><rect x="42.6" y="663" width="2.4" height="1"/><rect x="42.6" y="667" width="2.4" height="1"/><rect x="42.6" y="671" width="2.4" height="1"/><rect x="41" y="675" width="4" height="1"/><rect x="42.6" y="679" width="2.4" height="1"/><rect x="42.6" y="683" width="2.4" height="1"/><rect x="42.6" y="687" width="2.4" height="1"/><rect x="42.6" y="691" width="2.4" height="1"/><rect x="33" y="696" width="12" height="1"/><text transform="translate(34.2,700.9) rotate(90)" letter-spacing="3" font-size="7">28</text><rect x="42.6" y="700" width="2.4" height="1"/><rect x="42.6" y="704" width="2.4" height="1"/><rect x="42.6" y="708" width="2.4" height="1"/><rect x="42.6" y="712" width="2.4" height="1"/><rect x="41" y="716" width="4" height="1"/><rect x="42.6" y="720" width="2.4" height="1"/><rect x="42.6" y="724" width="2.4" height="1"/><rect x="42.6" y="728" width="2.4" height="1"/><rect x="42.6" y="732" width="2.4" height="1"/><rect x="33" y="736" width="12" height="1"/><text transform="translate(34.2,740.9) rotate(90)" letter-spacing="3" font-size="7">30</text><rect x="42.6" y="741" width="2.4" height="1"/><rect x="42.6" y="745" width="2.4" height="1"/><rect x="42.6" y="749" width="2.4" height="1"/></g></svg>
<div class="a" style="left:189px;top:121.5px;width:430.5px;height:608.5px;background:#fff;box-shadow:1.5px 1.5px 0 #8c8c8c,2.5px 2.5px 1px #a8a8a8"></div>
<div class="a" style="left:329.1px;top:217.6px;width:150px;height:150px;border-radius:50%;background:#000"></div>
<div class="a" style="left:762px;top:87px;width:12.5px;height:666px;background:linear-gradient(90deg,#e4e4e4,#f6f6f6 40%,#ededed)"></div>
<div class="a" style="left:33px;top:753px;width:741.5px;height:11.5px;background:#e6e6e6"></div>
<div class="a wht" style="left:33px;top:753px;width:37px;height:11.5px"></div>
<div class="t" style="left:36px;top:752px;font-size:9px">22.18%</div>
<div class="a" style="left:70px;top:753px;width:17px;height:11.5px;background:#d4d4d4"></div>
<div class="a" style="left:87px;top:753px;width:134px;height:11.5px;background:#dadada;border-left:1px solid #bdbdbd;border-right:1px solid #bdbdbd"></div>
<div class="t" style="left:118px;top:752px;font-size:9px">文档:24.9M/4.00M</div>
<div class="a" style="left:221px;top:753px;width:11px;height:11.5px;background:#efefef;border-right:1px solid #bbb"></div>
<div class="a" style="left:224px;top:755px;width:0;height:0;border-left:5px solid #111;border-top:4px solid transparent;border-bottom:4px solid transparent"></div>
<div class="a" style="left:232px;top:753px;width:530px;height:11.5px;background:linear-gradient(#ececec,#fafafa 40%,#f0f0f0)"></div>
<div class="a" style="left:762px;top:753px;width:12.5px;height:11.5px;background:#dadada"></div>
<div class="a" style="left:765.500px;top:92px;width:0;height:0;border-bottom:3px solid #9a9a9a;border-left:2.500px solid transparent;border-right:2.500px solid transparent"></div>
<div class="a" style="left:765.500px;top:745px;width:0;height:0;border-top:3px solid #9a9a9a;border-left:2.500px solid transparent;border-right:2.500px solid transparent"></div>
<div class="a" style="left:236px;top:756px;width:0;height:0;border-right:3px solid #9a9a9a;border-top:2.500px solid transparent;border-bottom:2.500px solid transparent"></div>
<div class="a" style="left:754px;top:756px;width:0;height:0;border-left:3px solid #777;border-top:2.500px solid transparent;border-bottom:2.500px solid transparent"></div>
<!--/DOC-->
<!--RIGHT-->
<div class="a" style="left:774px;top:70px;width:223px;height:694.500px;background:#646464"></div>
<div class="a" style="left:774px;top:70.500px;width:223px;height:9.500px;background:linear-gradient(#5c5c5c,#484848 85%,#333)"></div>
<svg class="a" style="left:774px;top:70px" width="223" height="10" viewBox="0 0 223 10"><path d="M19.500 5l2.500 -2.500v5zM23 5l2.500 -2.500v5z M214 2.500l2.500 2.500l-2.500 2.500zM217.500 2.500l2.500 2.500l-2.500 2.500z" fill="#ddd"/></svg>
<div class="a" style="left:775px;top:80px;width:27.500px;height:339.500px;background:#d5d5d5;border-left:1px solid #e6e6e6"></div>
<div class="a" style="left:776px;top:137px;width:26px;height:1px;background:#9c9c9c"></div><div class="a" style="left:776px;top:138px;width:26px;height:1px;background:#ececec"></div>
<div class="a" style="left:780px;top:141px;width:18px;height:1px;background:#bdbdbd"></div>
<div class="a" style="left:776px;top:221px;width:26px;height:1px;background:#9c9c9c"></div><div class="a" style="left:776px;top:222px;width:26px;height:1px;background:#ececec"></div>
<div class="a" style="left:780px;top:225px;width:18px;height:1px;background:#bdbdbd"></div>
<div class="a" style="left:776px;top:300px;width:26px;height:1px;background:#9c9c9c"></div><div class="a" style="left:776px;top:301px;width:26px;height:1px;background:#ececec"></div>
<div class="a" style="left:780px;top:304px;width:18px;height:1px;background:#bdbdbd"></div>
<div class="a" style="left:776px;top:334px;width:26px;height:1px;background:#9c9c9c"></div><div class="a" style="left:776px;top:335px;width:26px;height:1px;background:#ececec"></div>
<div class="a" style="left:780px;top:338px;width:18px;height:1px;background:#bdbdbd"></div>
<div class="a" style="left:776px;top:384px;width:26px;height:1px;background:#9c9c9c"></div><div class="a" style="left:776px;top:385px;width:26px;height:1px;background:#ececec"></div>
<div class="a" style="left:780px;top:388px;width:18px;height:1px;background:#bdbdbd"></div>
<div class="a" style="left:780px;top:84px;width:18px;height:1px;background:#bdbdbd"></div>
<svg class="a" style="left:775px;top:80px" width="28" height="340" viewBox="775 80 28 340" fill="none" stroke-linecap="round" stroke-linejoin="round"><rect x="784" y="93" width="3.500" height="12" fill="#555"/><rect x="784.500" y="94" width="2.500" height="2.500" fill="#eee"/><rect x="784.500" y="98" width="2.500" height="2.500" fill="#eee"/><path d="M790 103 C794 101 794 96 790.500 94.500" stroke="#333" stroke-width="1.600"/><path d="M788.500 95l3.500 -2.500l0.500 4z" fill="#333"/><rect x="782.500" y="117.500" width="13" height="10" fill="#e8e8e8" stroke="#555" stroke-width="1.200"/><path d="M786 119.500l7 3l-7 3z" fill="#444"/><circle cx="789" cy="158" r="3" fill="#555"/><path d="M789 151v14M782 158h14M784 153l10 10M794 153l-10 10" stroke="#555" stroke-width="1.300"/><rect x="782" y="175.500" width="14" height="11" fill="#e4e4e4" stroke="#777" stroke-width="0.800"/><path d="M782.500 186 L784 183 L785.500 184 L787 180 L788.500 178 L790 181 L791.500 179 L793 182 L795.500 183.500 V186z" fill="#444"/><circle cx="789" cy="206" r="6.500" fill="#666" stroke="#444" stroke-width="0.800"/><path d="M789 204.500v5.500M787.500 210h3M787.800 204.500h1.200" stroke="#fff" stroke-width="1.600" stroke-linecap="butt"/><circle cx="789" cy="202" r="1.100" fill="#fff"/><path d="M781 235.500h9M786 240.500h9" stroke="#333" stroke-width="1.600"/><circle cx="793" cy="235.500" r="2" fill="#333"/><circle cx="784" cy="240.500" r="2" fill="#333"/><path d="M785.500 262h6v6h-6z" stroke="#222" stroke-width="1.500"/><path d="M787 261l-2.500 -5M789 261l0.500 -6M790.500 261l3 -4" stroke="#222" stroke-width="1.500"/><rect x="783" y="288" width="12" height="3.500" rx="1" fill="#333"/><rect x="787.500" y="281" width="3.500" height="7" fill="#333"/><path d="M780.500 282.500h4M780.500 285.500h4" stroke="#444" stroke-width="1"/><path d="M791.500 315v10M788.500 315v10" stroke="#333" stroke-width="1.400" stroke-linecap="butt"/><path d="M792 314.500h-4.500a3 3 0 0 0 0 6h1.500z" fill="#333"/><path d="M783 348l11 11M794 348l-11 11" stroke="#222" stroke-width="2"/><circle cx="783.500" cy="358.500" r="1.800" fill="#222"/><circle cx="794" cy="348.500" r="1.800" fill="#222"/><path d="M784 376l5 -2l5 2v5l-5 2.500l-5 -2.500z" fill="#333"/><path d="M789 369v5" stroke="#333" stroke-width="1.200"/><text x="780.500" y="416" font-family="Liberation Sans, sans-serif" font-size="14" fill="#333" stroke="none">A</text><path d="M792.500 404v13" stroke="#333" stroke-width="1.200"/></svg>
<div class="a" style="left:803px;top:80px;width:193.5px;height:13.500px;background:linear-gradient(#a2a2a2,#929292)"></div>
<div class="a" style="left:803px;top:80px;width:27.500px;height:14px;background:#d6d6d6;border-left:1px solid #efefef"></div>
<div class="t" style="left:803px;top:80px;font-size:9.500px;color:#444;width:27px;text-align:center">颜色</div>
<div class="a" style="left:831px;top:80.5px;width:27.500px;height:13px;background:linear-gradient(#b2b2b2,#a2a2a2);border-right:1px solid #7c7c7c;border-left:1px solid #c0c0c0"></div>
<div class="t" style="left:831px;top:80px;font-size:9.500px;color:#4a4a4a;width:27px;text-align:center">色板</div>
<div class="a" style="left:859px;top:80.5px;width:27.500px;height:13px;background:linear-gradient(#b2b2b2,#a2a2a2);border-right:1px solid #7c7c7c;border-left:1px solid #c0c0c0"></div>
<div class="t" style="left:859px;top:80px;font-size:9.500px;color:#4a4a4a;width:27px;text-align:center">样式</div>
<svg class="a" style="left:983px;top:83px" width="11" height="8" viewBox="0 0 11 8"><path d="M0 2.500h3.500l-1.750 2.500z" fill="#333"/><path d="M4.500 1.500h6M4.500 3.500h6M4.500 5.500h6" stroke="#444" stroke-width="1"/></svg>
<div class="a" style="left:803px;top:93.500px;width:193.500px;height:89.500px;background:#d6d6d6;border-left:1px solid #ececec"></div>
<div class="a" style="left:819.500px;top:112px;width:14.500px;height:15px;background:#fff;border:1px solid #bbb"></div>
<div class="a" style="left:809px;top:103px;width:16px;height:16px;background:#000;border:1px solid #222;box-shadow:inset 0 0 0 1px #bbb,inset 0 0 0 2px #000"></div>
<div class="t" style="left:837.500px;top:102.0px;font-size:8.500px;color:#3a3a3a">R</div>
<div class="a" style="left:849px;top:106.5px;width:75px;height:4px;background:linear-gradient(90deg,#000,#e01010);border-top:1px solid #333"></div>
<svg class="a" style="left:845.500px;top:111.0px" width="8" height="7" viewBox="0 0 8 7"><path d="M4 0.500L7.500 5.500H0.500z" fill="#f4f4f4" stroke="#6a9a6a" stroke-width="1"/></svg>
<div class="a wht" style="left:928px;top:101.0px;width:28.500px;height:15.500px"></div>
<div class="t" style="left:931px;top:102.0px;font-size:8.500px;color:#3a3a3a">0</div>
<div class="t" style="left:837.500px;top:122.30000000000001px;font-size:8.500px;color:#3a3a3a">G</div>
<div class="a" style="left:849px;top:126.80000000000001px;width:75px;height:4px;background:linear-gradient(90deg,#000,#10c820);border-top:1px solid #333"></div>
<svg class="a" style="left:845.500px;top:131.3px" width="8" height="7" viewBox="0 0 8 7"><path d="M4 0.500L7.500 5.500H0.500z" fill="#f4f4f4" stroke="#6a9a6a" stroke-width="1"/></svg>
<div class="a wht" style="left:928px;top:121.30000000000001px;width:28.500px;height:15.500px"></div>
<div class="t" style="left:931px;top:122.30000000000001px;font-size:8.500px;color:#3a3a3a">0</div>
<div class="t" style="left:837.500px;top:142.6px;font-size:8.500px;color:#3a3a3a">B</div>
<div class="a" style="left:849px;top:147.1px;width:75px;height:4px;background:linear-gradient(90deg,#000,#1010d8);border-top:1px solid #333"></div>
<svg class="a" style="left:845.500px;top:151.6px" width="8" height="7" viewBox="0 0 8 7"><path d="M4 0.500L7.500 5.500H0.500z" fill="#f4f4f4" stroke="#6a9a6a" stroke-width="1"/></svg>
<div class="a wht" style="left:928px;top:141.6px;width:28.500px;height:15.500px"></div>
<div class="t" style="left:931px;top:142.6px;font-size:8.500px;color:#3a3a3a">0</div>
<div class="a" style="left:809px;top:166.500px;width:149px;height:10.500px;background:linear-gradient(180deg,rgba(255,255,255,.55),rgba(255,255,255,0) 40%,rgba(0,0,0,0) 45%,rgba(0,0,0,.95)),linear-gradient(90deg,#e00,#ee0 15%,#0c0 31%,#0cc 47%,#00d 63%,#d0d 79%,#e00)"></div>
<div class="a" style="left:958px;top:166.500px;width:6px;height:5px;background:#fff"></div><div class="a" style="left:958px;top:171.500px;width:6px;height:5.500px;background:#000"></div>
<div class="a" style="left:803px;top:183px;width:193.500px;height:2px;background:#3c3c3c"></div>
<div class="a" style="left:803px;top:185px;width:193.5px;height:13.500px;background:linear-gradient(#a2a2a2,#929292)"></div>
<div class="a" style="left:803px;top:185.5px;width:27.500px;height:13px;background:linear-gradient(#b2b2b2,#a2a2a2);border-right:1px solid #7c7c7c;border-left:1px solid #c0c0c0"></div>
<div class="t" style="left:803px;top:185px;font-size:9.500px;color:#4a4a4a;width:27px;text-align:center">调整</div>
<div class="a" style="left:831px;top:185px;width:27.500px;height:14px;background:#d6d6d6;border-left:1px solid #efefef"></div>
<div class="t" style="left:831px;top:185px;font-size:9.500px;color:#444;width:27px;text-align:center">蒙版</div>
<svg class="a" style="left:983px;top:188px" width="11" height="8" viewBox="0 0 11 8"><path d="M0 2.500h3.500l-1.750 2.500z" fill="#333"/><path d="M4.500 1.500h6M4.500 3.500h6M4.500 5.500h6" stroke="#444" stroke-width="1"/></svg>
<div class="a" style="left:803px;top:198.500px;width:193.500px;height:180.500px;background:#d6d6d6;border-left:1px solid #ececec"></div>
<div class="a" style="left:809px;top:200px;width:19.500px;height:26px;border:1px solid #333;background-color:#fff;background-image:linear-gradient(45deg,#ccc 25%,transparent 25%,transparent 75%,#ccc 75%),linear-gradient(45deg,#ccc 25%,transparent 25%,transparent 75%,#ccc 75%);background-size:5px 5px;background-position:0 0,2.500px 2.500px"></div>
<div class="a" style="left:816px;top:205px;width:5.500px;height:5px;border-radius:50%;background:#000"></div>
<div class="t" style="left:835px;top:206.500px;font-size:9.500px;font-style:italic;font-weight:bold;color:#222">未选择蒙版</div>
<svg class="a" style="left:933px;top:207px" width="12" height="12" viewBox="0 0 12 12"><rect x="0.700" y="0.700" width="10.600" height="10.600" fill="#e8e8e8" stroke="#444" stroke-width="1.400"/><circle cx="6" cy="6" r="3" fill="#fff" stroke="#666" stroke-width="0.800"/><path d="M7 7l3.500 3.500" stroke="#333" stroke-width="1.200"/></svg>
<svg class="a" style="left:953px;top:207px" width="12" height="12" viewBox="0 0 12 12"><path d="M2 8 L6 1.500 L10 6 L7 10.500z" fill="none" stroke="#555" stroke-width="1.100"/><rect x="4.800" y="0.500" width="2.200" height="2.200" fill="#eee" stroke="#444" stroke-width="0.600"/><rect x="9" y="5" width="2.200" height="2.200" fill="#eee" stroke="#444" stroke-width="0.600"/><rect x="1" y="7" width="2.200" height="2.200" fill="#eee" stroke="#444" stroke-width="0.600"/><path d="M8 8l3 3" stroke="#333" stroke-width="1.200"/></svg>
<div class="a" style="left:808px;top:228.500px;width:159px;height:1px;background:#b0b0b0"></div><div class="a" style="left:808px;top:229.500px;width:159px;height:1px;background:#eaeaea"></div>
<div class="t" style="left:808px;top:237px;font-size:9.500px;color:#f0f0f0">浓度:</div>
<div class="a" style="left:923px;top:234px;width:44px;height:16px;border:1px solid #ececec;background:#d8d8d8"></div>
<div class="a" style="left:811px;top:257px;width:152px;height:2px;background:#f2f2f2;border-radius:1px"></div>
<div class="t" style="left:808px;top:268px;font-size:9.500px;color:#f0f0f0">羽化:</div>
<div class="a" style="left:923px;top:265px;width:44px;height:16px;border:1px solid #ececec;background:#d8d8d8"></div>
<div class="a" style="left:811px;top:288px;width:152px;height:2px;background:#f2f2f2;border-radius:1px"></div>
<div class="t" style="left:808px;top:298px;font-size:9.500px;color:#f0f0f0">调整:</div>
<div class="a" style="left:904px;top:300.5px;width:62.500px;height:13px;border:1px solid #f2f2f2;background:#e2e2e2;border-radius:2px"></div>
<div class="t" style="left:904px;top:300.0px;width:62px;text-align:center;font-size:9.500px;color:#8c8c8c">蒙版边缘...</div>
<div class="a" style="left:904px;top:322px;width:62.500px;height:13px;border:1px solid #f2f2f2;background:#e2e2e2;border-radius:2px"></div>
<div class="t" style="left:904px;top:321.5px;width:62px;text-align:center;font-size:9.500px;color:#8c8c8c">颜色范围...</div>
<div class="a" style="left:904px;top:344px;width:62.500px;height:13px;border:1px solid #f2f2f2;background:#e2e2e2;border-radius:2px"></div>
<div class="t" style="left:904px;top:343.5px;width:62px;text-align:center;font-size:9.500px;color:#8c8c8c">反相</div>
<div class="a" style="left:808px;top:365px;width:159px;height:1px;background:#b0b0b0"></div><div class="a" style="left:808px;top:366px;width:159px;height:1px;background:#eaeaea"></div>
<svg class="a" style="left:808px;top:367px" width="160" height="11" viewBox="808 367 160 11" fill="none"><circle cx="816" cy="372" r="3.500" stroke="#e8e8e8" stroke-width="1.300" stroke-dasharray="1.500 1"/><path d="M832 372.500c3 -4 8 -4 11 0c-3 4 -8 4 -11 0z" fill="#eef6f4" stroke="#7ab0a8" stroke-width="1"/><circle cx="837.500" cy="372.500" r="1.500" fill="#6aa"/><path d="M854 370h9l-2 6h-5z" fill="#c8909a" stroke="#a86878" stroke-width="0.800"/><path d="M953.500 370.500h7v6.500h-7z" fill="#e8e8e8" stroke="#999" stroke-width="1"/><path d="M952.500 369.500h9" stroke="#888" stroke-width="1.200"/></svg>
<div class="a" style="left:803px;top:379px;width:193.500px;height:3px;background:#3c3c3c"></div>
<div class="a" style="left:803px;top:382px;width:193.5px;height:13.500px;background:linear-gradient(#a2a2a2,#929292)"></div>
<div class="a" style="left:803px;top:382px;width:27.500px;height:14px;background:#d6d6d6;border-left:1px solid #efefef"></div>
<div class="t" style="left:803px;top:382px;font-size:9.500px;color:#444;width:27px;text-align:center">图层</div>
<div class="a" style="left:831px;top:382.5px;width:27.500px;height:13px;background:linear-gradient(#b2b2b2,#a2a2a2);border-right:1px solid #7c7c7c;border-left:1px solid #c0c0c0"></div>
<div class="t" style="left:831px;top:382px;font-size:9.500px;color:#4a4a4a;width:27px;text-align:center">通道</div>
<div class="a" style="left:859px;top:382.5px;width:27.500px;height:13px;background:linear-gradient(#b2b2b2,#a2a2a2);border-right:1px solid #7c7c7c;border-left:1px solid #c0c0c0"></div>
<div class="t" style="left:859px;top:382px;font-size:9.500px;color:#4a4a4a;width:27px;text-align:center">路径</div>
<svg class="a" style="left:983px;top:385px" width="11" height="8" viewBox="0 0 11 8"><path d="M0 2.500h3.500l-1.750 2.500z" fill="#333"/><path d="M4.500 1.500h6M4.500 3.500h6M4.500 5.500h6" stroke="#444" stroke-width="1"/></svg>
<div class="a" style="left:803px;top:395.500px;width:193.500px;height:369px;background:#d6d6d6;border-left:1px solid #ececec"></div>
<div class="a wht" style="left:807px;top:399px;width:94px;height:16px"></div>
<div class="t" style="left:812px;top:400px;font-size:9.500px">正常</div>
<div class="a" style="left:892.5px;top:406px;width:0;height:0;border-top:3.5px solid #111;border-left:3.0px solid transparent;border-right:3.0px solid transparent"></div>
<div class="t" style="left:904px;top:400px;font-size:9.500px">不透明度:</div>
<div class="a wht" style="left:948px;top:399px;width:30px;height:13.500px"></div>
<div class="t" style="left:950.500px;top:399px;font-size:9px">100%</div>
<div class="a" style="left:981px;top:399px;width:11.500px;height:14px;background:#dcdcdc;border:1px solid #c8c8d0"></div>
<div class="a" style="left:985.5px;top:403.5px;width:0;height:0;border-left:3px solid #777;border-top:2.500px solid transparent;border-bottom:2.500px solid transparent"></div>
<div class="a" style="left:804px;top:417.500px;width:192px;height:1px;background:#c4c4c4"></div>
<div class="t" style="left:809px;top:421.500px;font-size:9.500px">锁定:</div>
<svg class="a" style="left:834px;top:421px" width="56" height="14" viewBox="834 421 56 14" fill="none"><rect x="836.500" y="423.500" width="7.500" height="7.500" fill="#f4f4f4" stroke="#666" stroke-width="1"/><path d="M851 432l7 -7.500" stroke="#222" stroke-width="1.800" stroke-linecap="round"/><path d="M850.500 432.500l2 -2.500" stroke="#222" stroke-width="2.600" stroke-linecap="round"/><path d="M868.500 424v8M864.500 428h8" stroke="#222" stroke-width="1.200"/><path d="M868.500 423l1.700 1.900h-3.400zM868.500 433l1.700 -1.900h-3.400zM863.500 428l1.900 -1.700v3.400zM873.500 428l-1.900 -1.700v3.400z" fill="#222"/><rect x="879" y="427" width="7" height="5.500" fill="#222"/><path d="M880.500 427v-1.500a2 2 0 0 1 4 0v1.500" stroke="#222" stroke-width="1.300"/></svg>
<div class="t" style="left:923px;top:421.500px;font-size:9.500px">填充:</div>
<div class="a wht" style="left:948px;top:421px;width:30px;height:13.500px"></div>
<div class="t" style="left:950.500px;top:421px;font-size:9px">100%</div>
<div class="a" style="left:981px;top:421px;width:11.500px;height:14px;background:#dcdcdc;border:1px solid #c8c8d0"></div>
<div class="a" style="left:985.5px;top:425.5px;width:0;height:0;border-left:3px solid #777;border-top:2.500px solid transparent;border-bottom:2.500px solid transparent"></div>
<div class="a" style="left:804px;top:437.500px;width:179px;height:1px;background:#b8b8b8"></div>
<div class="a" style="left:822px;top:438px;width:161px;height:30px;background:#3399fe"></div>
<div class="a" style="left:821.500px;top:438px;width:1px;height:61px;background:#b4b4b4"></div>
<div class="a" style="left:804px;top:468px;width:179px;height:1px;background:#c0c0c0"></div>
<div class="a" style="left:804px;top:499px;width:179px;height:1px;background:#b8b8b8"></div>
<svg class="a" style="left:807.500px;top:449px" width="10.400" height="8" viewBox="0 0 13 10"><path d="M0.500 5c3 -5 9 -5 12 0c-3 4.500 -9 4.500 -12 0z" fill="#555" stroke="#333" stroke-width="0.800"/><circle cx="6.500" cy="5" r="2.200" fill="#222"/><path d="M2 3.500c2.500 -2 6.500 -2 9 0" stroke="#aaa" stroke-width="0.800" fill="none"/></svg>
<svg class="a" style="left:807.500px;top:480px" width="10.400" height="8" viewBox="0 0 13 10"><path d="M0.500 5c3 -5 9 -5 12 0c-3 4.500 -9 4.500 -12 0z" fill="#555" stroke="#333" stroke-width="0.800"/><circle cx="6.500" cy="5" r="2.200" fill="#222"/><path d="M2 3.500c2.500 -2 6.500 -2 9 0" stroke="#aaa" stroke-width="0.800" fill="none"/></svg>
<div class="a" style="left:824px;top:439px;width:20.500px;height:28px;border:1px solid #dfe9f6;outline:1px solid #2a5a9a;outline-offset:-2px;background-color:#fff;background-image:linear-gradient(45deg,#ccc 25%,transparent 25%,transparent 75%,#ccc 75%),linear-gradient(45deg,#ccc 25%,transparent 25%,transparent 75%,#ccc 75%);background-size:5px 5px;background-position:0 0,2.500px 2.500px"></div>
<div class="a" style="left:832px;top:445px;width:5.500px;height:5px;border-radius:50%;background:#000"></div>
<div class="t" style="left:850px;top:446px;font-size:9.500px;color:#fff">图层 1</div>
<div class="a wht" style="left:825px;top:471px;width:19px;height:25px;border:1px solid #333"></div>
<div class="t" style="left:852px;top:476.500px;font-size:9.500px;color:#222">背景</div>
<svg class="a" style="left:962px;top:478px" width="10" height="11" viewBox="0 0 10 11" fill="none"><rect x="1.500" y="5" width="7" height="5" fill="#f0f0f0" stroke="#333" stroke-width="1"/><path d="M3 5v-1.500a2 2 0 0 1 4 0v1.500" stroke="#333" stroke-width="1.200"/></svg>
<div class="a" style="left:983px;top:438px;width:13.500px;height:311px;background:linear-gradient(90deg,#e0e0e0,#f0f0f0 50%,#e6e6e6)"></div>
<div class="a" style="left:987px;top:443px;width:0;height:0;border-bottom:3.500px solid #999;border-left:3px solid transparent;border-right:3px solid transparent"></div>
<div class="a" style="left:987px;top:742px;width:0;height:0;border-top:3.500px solid #999;border-left:3px solid transparent;border-right:3px solid transparent"></div>
<div class="a" style="left:804px;top:749px;width:192.500px;height:1px;background:#bcbcbc"></div><div class="a" style="left:804px;top:750px;width:192.500px;height:1px;background:#ececec"></div>
<svg class="a" style="left:836px;top:751px" width="145" height="13" viewBox="836 751 145 13" fill="none"><rect x="839.500" y="754" width="7" height="4.500" rx="2.200" stroke="#999" stroke-width="1.300"/><rect x="845.500" y="754" width="7" height="4.500" rx="2.200" stroke="#999" stroke-width="1.300"/><text x="861.500" y="761" font-family="Liberation Serif, serif" font-style="italic" font-weight="bold" font-size="11" fill="#222">fx</text><rect x="874" y="760" width="1.500" height="1.500" fill="#222"/><rect x="883.500" y="752.500" width="10.500" height="9.500" fill="#555" stroke="#333" stroke-width="1"/><circle cx="888.700" cy="757.200" r="2.600" fill="#fff"/><circle cx="909.500" cy="757" r="4.300" stroke="#222" stroke-width="1.200" fill="#f4f4f4"/><path d="M906.500 760a4.300 4.300 0 0 1 6 -6z" fill="#222"/><rect x="916" y="760" width="1.500" height="1.500" fill="#222"/><path d="M926.500 754.500h3l1 1h4.500v5h-8.500z" fill="#e8e8e8" stroke="#555" stroke-width="1"/><path d="M946 754.500h6l2.500 2.500v4.500h-8.500z" fill="#f0f0f0" stroke="#444" stroke-width="1"/><path d="M952 754.500v2.500h2.500" stroke="#444" stroke-width="0.800"/><path d="M969 755.500h6.500v6h-6.500z" fill="#e8e8e8" stroke="#333" stroke-width="1.100"/><path d="M968 754.500h8.500M971 753h2.500" stroke="#333" stroke-width="1.200"/><path d="M971 757v3M973.500 757v3" stroke="#555" stroke-width="0.800"/></svg>
<!--/RIGHT-->
<!--OVERLAY-->
<svg class="a" style="left:700px;top:420px" width="300" height="190" viewBox="700 420 300 190" fill="none" stroke="#de0a12" stroke-linecap="round" stroke-linejoin="round"><ellipse cx="904" cy="452.700" rx="22.500" ry="15.800" stroke-width="3.200" transform="rotate(-4 904 452.700)"/><path d="M722 589L901.500 452.500" stroke-width="3.400"/><path d="M885 455L902.500 452L897 465" stroke-width="3.200"/></svg>
<!--/OVERLAY-->
</div>
</body></html>
